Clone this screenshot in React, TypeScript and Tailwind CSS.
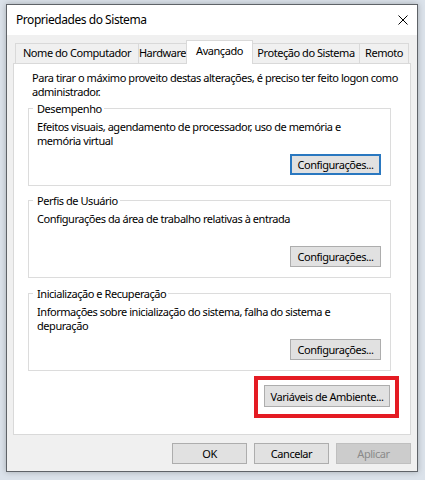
import type { ReactNode } from 'react';

const TABS = [
  { label: 'Nome do Computador', width: 'w-[124px]' },
  { label: 'Hardware', width: 'w-[49px]' },
  { label: 'Avançado', width: 'w-[67px]', active: true },
  { label: 'Proteção do Sistema', width: 'w-[108px]' },
  { label: 'Remoto', width: 'w-[50px]' },
];

function Button({ children, className = '', focused = false, disabled = false }: { children: ReactNode; className?: string; focused?: boolean; disabled?: boolean }) {
  const look = disabled
    ? 'bg-[#cccccc] border border-[#bfbfbf] text-[#8a8a8a]'
    : focused
      ? 'bg-[#e1e1e1] border-2 border-[#2a78c0] text-black'
      : 'bg-[#e1e1e1] border border-[#adadad] text-black';
  return (
    <button className={`flex h-[21px] items-center justify-center text-[11px] leading-none tracking-[-0.45px] ${look} ${className}`}>
      {children}
    </button>
  );
}

function GroupBox({ title, lines, focused = false, className = '' }: { title: string; lines: string[]; focused?: boolean; className?: string }) {
  return (
    <div className={`ml-[14px] flex h-[78px] w-[363px] flex-col border border-[#dcdcdc] ${className}`}>
      <div className="-mt-[7px] ml-[4px] w-fit bg-white pl-[4px] pr-[2px] leading-[13px]">{title}</div>
      <div className="mt-[5px] pl-[8px] leading-[14px]">
        {lines.map((l) => (
          <div key={l} className="whitespace-nowrap">{l}</div>
        ))}
      </div>
      <div className="mt-auto flex justify-end pb-[10px] pr-[9px]">
        <Button focused={focused} className="w-[91px]">Configurações...</Button>
      </div>
    </div>
  );
}

export default function App() {
  return (
    <div className="h-[480px] w-[425px] bg-[#dbe2ea] pl-[6px] pt-[4px] font-['Noto_Sans',sans-serif] text-[11px] tracking-[-0.45px] text-black">
      <div className="flex h-[468px] w-[412px] flex-col border border-[#5f6368] bg-[#f0f0f0] shadow-[0_0_6px_rgba(0,0,0,0.25)]">
        {/* title bar */}
        <div className="flex h-[30px] items-center justify-between bg-white pl-[9px] pr-[9px]">
          <span className="text-[12px]">Propriedades do Sistema</span>
          <svg width="10" height="10" viewBox="0 0 10 10" className="mt-[-1px]">
            <path d="M0.5 0.5 L9.5 9.5 M9.5 0.5 L0.5 9.5" stroke="#000" strokeWidth="1" />
          </svg>
        </div>

        {/* tabs */}
        <div className="relative z-10 ml-[8px] mt-[5px] flex h-[23px] items-end">
          {TABS.map((t, i) =>
            t.active ? (
              <div
                key={t.label}
                className={`${t.width} -mb-px flex h-[24px] items-center justify-center border border-b-0 border-[#d9d9d9] bg-white pb-[2px] ${i > 0 ? '-ml-px' : ''}`}
              >
                {t.label}
              </div>
            ) : (
              <div
                key={t.label}
                className={`${t.width} flex h-[20px] items-center justify-center border border-b-0 border-[#d9d9d9] bg-[#f0f0f0] ${i > 0 ? '-ml-px' : ''}`}
              >
                {t.label}
              </div>
            ),
          )}
        </div>

        {/* tab panel */}
        <div className="ml-[6px] flex h-[372px] w-[398px] flex-col border border-[#d9d9d9] bg-white">
          <div className="pl-[18px] pt-[7px] leading-[14px]">
            <div className="whitespace-nowrap">Para tirar o máximo proveito destas alterações, é preciso ter feito logon como</div>
            <div>administrador.</div>
          </div>

          <GroupBox
            className="mt-[9px]"
            title="Desempenho"
            lines={['Efeitos visuais, agendamento de processador, uso de memória e', 'memória virtual']}
            focused
          />
          <GroupBox
            className="mt-[14px]"
            title="Perfis de Usuário"
            lines={['Configurações da área de trabalho relativas à entrada']}
          />
          <GroupBox
            className="mt-[15px]"
            title="Inicialização e Recuperação"
            lines={['Informações sobre inicialização do sistema, falha do sistema e', 'depuração']}
          />

          <div className="mt-[5px] flex justify-end pr-[11px]">
            <div className="border-4 border-[#e41b23] pb-[7px] pl-[6px] pr-[5px] pt-[5px]">
              <Button className="h-[22px] w-[126px]">Variáveis de Ambiente...</Button>
            </div>
          </div>
        </div>

        {/* dialog buttons */}
        <div className="mt-[8px] flex justify-end gap-[7px] pr-[6px]">
          <Button className="w-[75px]">OK</Button>
          <Button className="w-[75px]">Cancelar</Button>
          <Button className="w-[75px]" disabled>Aplicar</Button>
        </div>
      </div>
    </div>
  );
}
